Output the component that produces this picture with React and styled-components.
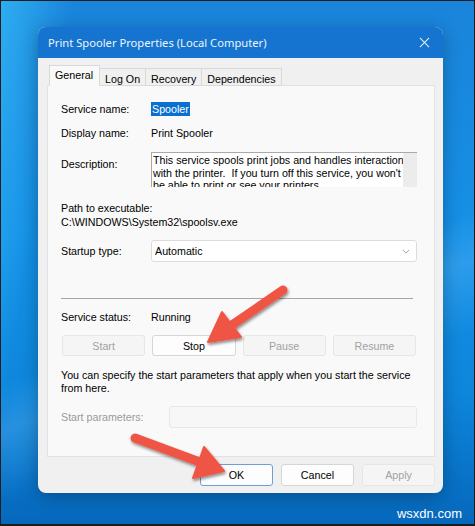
import styled, { createGlobalStyle } from "styled-components";

const GlobalStyle = createGlobalStyle`
  html, body {
    margin: 0;
    padding: 0;
  }
  body {
    font-family: "Liberation Sans", Arial, sans-serif;
    font-size: 10.7px;
    color: #000;
  }
  * {
    box-sizing: border-box;
  }
`;

const description = [
  "This service spools print jobs and handles interaction",
  "with the printer.\u00a0 If you turn off this service, you won't",
  "be able to print or see your printers.",
];

export default function App() {
  return (
    <>
      <GlobalStyle />
      <Desktop>
        <Window>
          <TitleBar>
            <Title>Print Spooler Properties (Local Computer)</Title>
            <CloseIcon viewBox="0 0 12 12">
              <path d="M1 1 L11 11 M11 1 L1 11" />
            </CloseIcon>
          </TitleBar>

          <Body>
            <TabList>
              <Tab $active>General</Tab>
              <Tab>Log On</Tab>
              <Tab>Recovery</Tab>
              <Tab>Dependencies</Tab>
            </TabList>

            <Panel>
              <Row $top={16}>
                <Label>Service name:</Label>
                <Selected>Spooler</Selected>
              </Row>
              <Row $top={10}>
                <Label>Display name:</Label>
                <span>Print Spooler</span>
              </Row>

              <DescRow>
                <Label $offset={6}>Description:</Label>
                <DescBox>
                  <DescText>
                    {description.map((line) => (
                      <Line key={line}>{line}</Line>
                    ))}
                  </DescText>
                  <ScrollStrip />
                </DescBox>
              </DescRow>

              <Block $top={14}>Path to executable:</Block>
              <Block $top={0}>C:\WINDOWS\System32\spoolsv.exe</Block>

              <FieldRow $top={11}>
                <Label>Startup type:</Label>
                <Dropdown>
                  <span>Automatic</span>
                  <Chevron viewBox="0 0 10 6">
                    <path d="M1 1 L5 5 L9 1" />
                  </Chevron>
                </Dropdown>
              </FieldRow>

              <Separator />

              <Row $top={11}>
                <Label>Service status:</Label>
                <span>Running</span>
              </Row>

              <ServiceButtons>
                <Button disabled>Start</Button>
                <Button>Stop</Button>
                <Button disabled>Pause</Button>
                <Button disabled>Resume</Button>
              </ServiceButtons>

              <Note>
                <Line>You can specify the start parameters that apply when you start the service</Line>
                <Line>from here.</Line>
              </Note>

              <FieldRow $top={11}>
                <Label $muted $width={108}>Start parameters:</Label>
                <ParamInput />
              </FieldRow>
            </Panel>

            <Footer>
              <Button $primary>OK</Button>
              <Button>Cancel</Button>
              <Button disabled>Apply</Button>
            </Footer>
          </Body>
        </Window>

        <Watermark>wsxdn.com</Watermark>

        <Arrows viewBox="0 0 475 526">
          <defs>
            <filter id="shadow" x="-20%" y="-20%" width="140%" height="140%">
              <feDropShadow dx="1" dy="2" stdDeviation="1.6" floodColor="#000" floodOpacity="0.45" />
            </filter>
          </defs>
          <g filter="url(#shadow)" fill="#ef5445" stroke="#ef5445" strokeLinejoin="round">
            <line x1="282" y1="289" x2="231" y2="324" strokeWidth="9" strokeLinecap="round" />
            <polygon points="221,311 207,341 240,336" strokeWidth="2" />
            <line x1="134" y1="437" x2="196" y2="460" strokeWidth="9" strokeLinecap="round" />
            <polygon points="203,446 223,470 192,477" strokeWidth="2" />
          </g>
        </Arrows>
      </Desktop>
    </>
  );
}

const Desktop = styled.div`
  position: relative;
  width: 475px;
  height: 526px;
  overflow: hidden;
  border: 1px solid #1c1c1c;
  border-bottom-width: 2px;
  padding: 26px 0 0 37px;
  background:
    linear-gradient(100deg, rgba(60, 200, 255, 0.6) 0%, rgba(60, 200, 255, 0) 13%),
    linear-gradient(160deg, rgba(255, 255, 255, 0) 55%, rgba(120, 200, 255, 0.25) 62%, rgba(255, 255, 255, 0) 72%),
    linear-gradient(180deg, #1a84da 0%, #1590e6 45%, #0d86dc 75%, #0668bc 100%);
`;

const Window = styled.div`
  width: 405px;
  height: 466px;
  border-radius: 8px;
  overflow: hidden;
  background: #f0f0f0;
  box-shadow: 0 4px 18px rgba(0, 0, 0, 0.28);
  display: flex;
  flex-direction: column;
`;

const TitleBar = styled.div`
  height: 31px;
  flex: none;
  background: #1574cf;
  display: flex;
  align-items: center;
  justify-content: space-between;
  padding: 0 13px 0 10px;
`;

const Title = styled.span`
  font-family: "Noto Sans", "Open Sans", sans-serif;
  font-size: 11.2px;
  color: #eef5fc;
`;

const CloseIcon = styled.svg`
  width: 11px;
  height: 11px;
  fill: none;
  stroke: #e8f1fb;
  stroke-width: 1.1;
`;

const Body = styled.div`
  flex: 1;
  display: flex;
  flex-direction: column;
  padding: 8px 8px 0 9px;
`;

const TabList = styled.div`
  display: flex;
  align-items: flex-end;
  height: 20px;
  padding-left: 2px;
  position: relative;
  z-index: 1;
  margin-bottom: -1px;
`;

const Tab = styled.div`
  height: ${(p) => (p.$active ? 21 : 18)}px;
  padding: ${(p) => (p.$active ? "2px 6px 0 5px" : "3px 5px 0 5px")};
  margin-left: ${(p) => (p.$active ? 0 : -1)}px;
  background: ${(p) => (p.$active ? "#f9f9f9" : "#f0f0f0")};
  border: 1px solid #d9d9d9;
  border-bottom-color: ${(p) => (p.$active ? "#f9f9f9" : "#d9d9d9")};
  line-height: 14px;
`;

const Panel = styled.div`
  height: 372px;
  background: #f9f9f9;
  border: 1px solid #e2e2e2;
  padding: 0 17px 0 13px;
  display: flex;
  flex-direction: column;
`;

const Row = styled.div`
  display: flex;
  align-items: center;
  height: 14px;
  margin-top: ${(p) => p.$top}px;
`;

const Label = styled.span`
  flex: none;
  width: ${(p) => p.$width || 90}px;
  margin-top: ${(p) => p.$offset || 0}px;
  color: ${(p) => (p.$muted ? "#9a9a9a" : "#000")};
`;

const Selected = styled.span`
  background: #0a6fd0;
  color: #fff;
  padding: 0 1px;
  line-height: 14px;
`;

const DescRow = styled.div`
  display: flex;
  align-items: flex-start;
  margin-top: 12px;
`;

const DescBox = styled.div`
  width: 267px;
  height: 35px;
  display: flex;
  overflow: hidden;
  background: #ececec;
  border-top: 1px solid #a9a9a9;
  border-left: 1px solid #a9a9a9;
`;

const DescText = styled.div`
  width: 251px;
  background: #fff;
  padding: 1px 0 0 1px;
  line-height: 12.5px;
`;

const Line = styled.div`
  white-space: nowrap;
`;

const ScrollStrip = styled.div`
  flex: 1;
  background: #ececec;
`;

const Block = styled.div`
  height: 14px;
  line-height: 14px;
  margin-top: ${(p) => p.$top}px;
`;

const FieldRow = styled.div`
  display: flex;
  align-items: center;
  margin-top: ${(p) => p.$top}px;
`;

const Dropdown = styled.div`
  width: 267px;
  height: 22px;
  background: #fff;
  border: 1px solid #dcdcdc;
  border-radius: 3px;
  display: flex;
  align-items: center;
  justify-content: space-between;
  padding: 0 6px 0 3px;
`;

const Chevron = styled.svg`
  width: 8px;
  height: 5px;
  fill: none;
  stroke: #8a8a8a;
  stroke-width: 1;
`;

const Separator = styled.div`
  height: 1px;
  background: #a5a5a5;
  margin: 36px 4px 0 0;
`;

const ServiceButtons = styled.div`
  display: grid;
  grid-template-columns: repeat(4, 1fr);
  gap: 7px;
  margin: 11px 1px 0 1px;
  & > button {
    height: 21px;
  }
`;

const Button = styled.button`
  height: 22px;
  font-family: "Liberation Sans", Arial, sans-serif;
  font-size: 10.7px;
  color: #000;
  background: #fdfdfd;
  border: 1px solid ${(p) => (p.$primary ? "#6d9fd6" : "#d6d6d6")};
  border-radius: 3px;
  padding: 0;
  &:disabled {
    color: #a2a2a2;
    background: #f5f5f5;
    border-color: #e6e6e6;
  }
`;

const Note = styled.div`
  margin-top: 13px;
  line-height: 13px;
`;

const ParamInput = styled.div`
  width: 249px;
  height: 22px;
  background: #f7f7f7;
  border: 1px solid #e8e8e8;
  border-radius: 3px;
`;

const Footer = styled.div`
  display: flex;
  justify-content: flex-end;
  gap: 8px;
  padding-top: 7px;
  & > button {
    width: 73px;
  }
`;

const Watermark = styled.div`
  position: absolute;
  right: 12px;
  bottom: 3px;
  font-family: "Liberation Sans", Arial, sans-serif;
  font-size: 13px;
  color: #fff;
`;

const Arrows = styled.svg`
  position: absolute;
  left: 0;
  top: 0;
  width: 475px;
  height: 526px;
  pointer-events: none;
`;
